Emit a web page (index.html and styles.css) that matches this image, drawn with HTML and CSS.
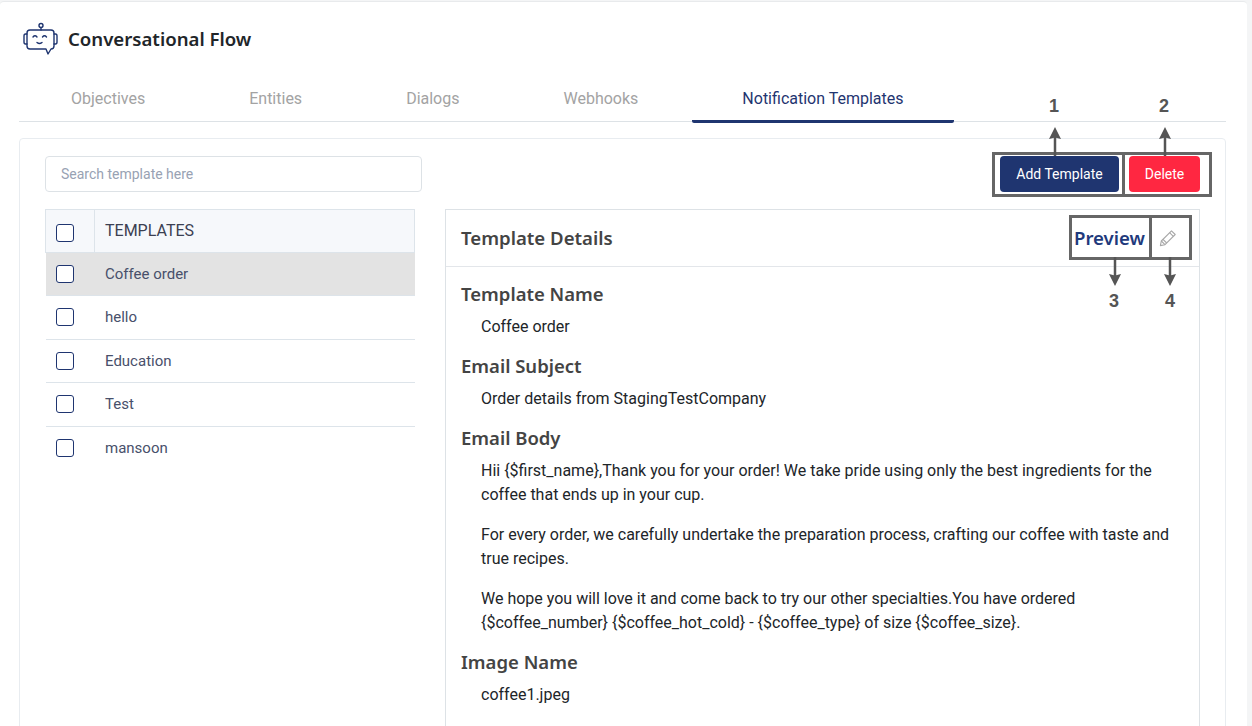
FILE: index.html
```html
<!DOCTYPE html>
<html>
<head>
    <title>Conversational Flow</title>
    <link rel="stylesheet" href="styles.css">
</head>
<body>
    <div class="app">
        <div class="page-head">
            <svg class="bot-icon" width="36" height="36" viewBox="22 20 36 36" fill="none" stroke="#1f3570" stroke-width="1.4" stroke-linecap="round" stroke-linejoin="round">
                <circle cx="41" cy="24.5" r="2"/>
                <path d="M41 26.5V29"/>
                <path d="M30 29H51Q54 29 54 32V45Q54 48 51 48H51L48 53L46 48H30Q27 48 27 45V32Q27 29 30 29Z"/>
                <path d="M27 33H25.5Q24 33 24 35V41Q24 43 25.5 43H27"/>
                <path d="M54 33H55.5Q57 33 57 35V41Q57 43 55.5 43H54"/>
                <path d="M33 36Q35 33.6 37 36"/>
                <path d="M42.5 36Q44.5 33.6 46.5 36"/>
                <path d="M37 41.5Q39.5 43.5 42 41.5"/>
            </svg>
            <h1>Conversational Flow</h1>
        </div>

        <nav class="tabs">
            <a href="#objectives">Objectives</a>
            <a href="#entities">Entities</a>
            <a href="#dialogs">Dialogs</a>
            <a href="#webhooks">Webhooks</a>
            <a href="#templates" class="active">Notification Templates</a>
        </nav>

        <div class="panel">
            <div class="toolbar">
                <input type="text" class="search" placeholder="Search template here">
                <div class="actions">
                    <button class="btn btn-add">Add Template</button>
                    <button class="btn btn-delete">Delete</button>
                </div>
            </div>

            <div class="columns">
                <div class="list">
                    <div class="list-head">
                        <div class="check-cell"><span class="check"></span></div>
                        <div class="list-title">TEMPLATES</div>
                    </div>
                    <div class="row selected"><span class="check"></span><span>Coffee order</span></div>
                    <div class="row"><span class="check"></span><span>hello</span></div>
                    <div class="row"><span class="check"></span><span>Education</span></div>
                    <div class="row"><span class="check"></span><span>Test</span></div>
                    <div class="row last"><span class="check"></span><span>mansoon</span></div>
                </div>

                <div class="details">
                    <div class="details-head">
                        <h2>Template Details</h2>
                        <a href="#preview" class="preview">Preview</a>
                        <svg class="edit-icon" width="18" height="18" viewBox="0 0 18 18" fill="none" stroke="#a8a8a8" stroke-width="1.1" stroke-linejoin="round">
                            <path d="M12.5 1.8L16.2 5.5L6 15.7L1.4 16.6L2.3 12Z"/>
                            <path d="M10.6 3.7L14.3 7.4"/>
                            <path d="M4 10.3L7.7 14"/>
                            <path d="M2.3 12L6 15.7"/>
                        </svg>
                    </div>
                    <div class="details-body">
                        <h3>Template Name</h3>
                        <div class="value"><p>Coffee order</p></div>
                        <h3>Email Subject</h3>
                        <div class="value"><p>Order details from StagingTestCompany</p></div>
                        <h3>Email Body</h3>
                        <div class="value">
                            <p>Hii {$first_name},Thank you for your order! We take pride using only the best ingredients for the coffee that ends up in your cup.</p>
                            <p>For every order, we carefully undertake the preparation process, crafting our coffee with taste and true recipes.</p>
                            <p>We hope you will love it and come back to try our other specialties.You have ordered {$coffee_number} {$coffee_hot_cold} - {$coffee_type} of size {$coffee_size}.</p>
                        </div>
                        <h3>Image Name</h3>
                        <div class="value"><p>coffee1.jpeg</p></div>
                    </div>
                </div>
            </div>
        </div>
    </div>

    <!-- annotations drawn over the screenshot -->
    <div class="mark mark-add"></div>
    <div class="mark mark-delete"></div>
    <div class="mark mark-preview"></div>
    <div class="mark mark-edit"></div>
    <svg class="arrows" width="1252" height="726" fill="#555" stroke="#555" stroke-width="2.5">
        <path d="M1055 156V136"/>
        <path d="M1055 127L1061 139L1055 137.500L1049 139Z" stroke="none"/>
        <path d="M1165 156V136"/>
        <path d="M1165 127L1171 139L1165 137.500L1159 139Z" stroke="none"/>
        <path d="M1115 257V277"/>
        <path d="M1115 286L1121 274L1115 275.500L1109 274Z" stroke="none"/>
        <path d="M1170 257V277"/>
        <path d="M1170 286L1176 274L1170 275.500L1164 274Z" stroke="none"/>
    </svg>
    <span class="num num-1">1</span>
    <span class="num num-2">2</span>
    <span class="num num-3">3</span>
    <span class="num num-4">4</span>
</body>
</html>
```

FILE: styles.css
```css
* {
    box-sizing: border-box;
}
html, body {
    height: 100%;
}
body {
    margin: 0;
    background-color: #f4f5f6;
    font-family: 'Roboto', sans-serif;
    font-size: 16px;
    color: #212529;
    overflow: hidden;
    position: relative;
}
.app {
    width: 1247px;
    height: 726px;
    margin-top: 1px;
    padding: 0 21px 0 19px;
    background-color: white;
    border-top: 1px solid #e8eaec;
    border-radius: 4px 4px 0 0;
    overflow: hidden;
}
.page-head {
    display: flex;
    align-items: center;
    height: 72px;
    padding-left: 3px;
    padding-top: 1px;
}
.bot-icon {
    margin-right: 10px;
}
h1 {
    margin: 0 0 1px;
    font-family: 'Noto Sans', sans-serif;
    font-size: 18.6px;
    font-weight: 600;
    color: #212529;
}
.tabs {
    display: flex;
    gap: 4px;
    height: 48px;
    padding-left: 2px;
    border-bottom: 1px solid #dde2e6;
}
.tabs a {
    height: 49px;
    padding: 13px 50px 0;
    line-height: 24px;
    color: #a3a3a3;
    text-decoration: none;
    border-bottom: 3px solid transparent;
    border-radius: 2px;
}
.tabs a.active {
    color: #1f3570;
    border-bottom-color: #1f3570;
}
.panel {
    height: 700px;
    margin-top: 16px;
    padding: 17px 25px 0;
    border: 1px solid #e8ecf0;
    border-radius: 4px;
}
.toolbar {
    display: flex;
    justify-content: space-between;
}
.search {
    width: 377px;
    height: 36px;
    padding: 0 15px;
    border: 1px solid #dde2e6;
    border-radius: 4px;
    font-family: 'Roboto', sans-serif;
    font-size: 14px;
}
.search::placeholder {
    color: #98a2b3;
}
.actions {
    display: flex;
    gap: 10px;
}
.btn {
    height: 36px;
    border: none;
    border-radius: 4px;
    color: white;
    font-family: 'Roboto', sans-serif;
    font-size: 14px;
}
.btn-add {
    width: 119px;
    background-color: #1f3570;
}
.btn-delete {
    width: 71px;
    background-color: #ff2741;
}
.columns {
    display: flex;
    gap: 30px;
    margin-top: 17px;
}
.list {
    width: 370px;
    flex-shrink: 0;
    font-size: 15px;
    color: #48506b;
}
.list-head {
    display: flex;
    height: 43.5px;
    background-color: #f6f8fb;
    border: 1px solid #dde4ea;
}
.check-cell {
    width: 49px;
    padding: 14px 0 0 10px;
    border-right: 1px solid #dde4ea;
}
.list-title {
    padding: 10px 10px 0;
    font-size: 16px;
    line-height: 21px;
    color: #3b4052;
}
.check {
    display: block;
    width: 18px;
    height: 18px;
    background-color: white;
    border: 1.5px solid #1f3570;
    border-radius: 3px;
}
.row {
    display: flex;
    align-items: center;
    gap: 31px;
    height: 43.5px;
    margin-left: 1px;
    padding-left: 10px;
    border-bottom: 1px solid #dde4ea;
}
.row.selected {
    background-color: #e3e3e3;
}
.row.last {
    border-bottom: none;
}
.details {
    width: 755px;
    height: 600px;
    border: 1px solid #dde2e6;
}
.details-head {
    display: flex;
    align-items: center;
    height: 57px;
    padding: 0 15px;
    border-bottom: 1px solid #e3e6ea;
}
h2 {
    flex: 1;
    margin: 0 0 2px;
    font-family: 'Noto Sans', sans-serif;
    font-size: 18.6px;
    font-weight: 600;
    color: #444;
}
.preview {
    margin: 0 14px 2px 0;
    font-family: 'Noto Sans', sans-serif;
    font-size: 18.6px;
    font-weight: 600;
    color: #1f3a7c;
    text-decoration: none;
}
.edit-icon {
    margin-right: 7px;
}
.details-body {
    padding: 16px 15px 0;
}
h3 {
    margin: 0 0 10px;
    font-family: 'Noto Sans', sans-serif;
    font-size: 18.5px;
    font-weight: 600;
    line-height: 22px;
    color: #444;
}
.value {
    margin: 0 0 16px;
    padding-left: 20px;
    line-height: 24px;
    color: #212529;
}
.value p {
    margin: 0 0 16px;
}
.value p:last-child {
    margin-bottom: 0;
}

/* annotation overlay */
.mark {
    position: absolute;
    border: 3px solid #666;
}
.mark-add {
    left: 992px;
    top: 152px;
    width: 133px;
    height: 45px;
}
.mark-delete {
    left: 1122px;
    top: 152px;
    width: 90px;
    height: 45px;
}
.mark-preview {
    left: 1069px;
    top: 215px;
    width: 83px;
    height: 45px;
}
.mark-edit {
    left: 1149px;
    top: 215px;
    width: 43px;
    height: 45px;
}
.arrows {
    position: absolute;
    left: 0;
    top: 0;
}
.num {
    position: absolute;
    width: 20px;
    text-align: center;
    font-family: 'Liberation Sans', sans-serif;
    font-size: 18px;
    font-weight: bold;
    line-height: 20px;
    color: #555;
}
.num-1 {
    left: 1044px;
    top: 96px;
}
.num-2 {
    left: 1154px;
    top: 96px;
}
.num-3 {
    left: 1104px;
    top: 291px;
}
.num-4 {
    left: 1160px;
    top: 291px;
}
```
